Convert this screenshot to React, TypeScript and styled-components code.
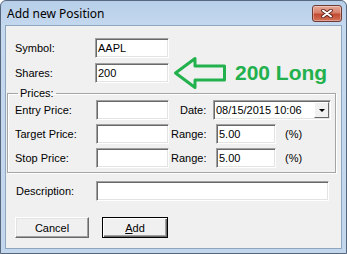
import React from 'react'
import styled, { createGlobalStyle } from 'styled-components'

const GlobalStyle = createGlobalStyle`
  html, body {
    margin: 0;
    padding: 0;
  }
  body {
    width: 347px;
    height: 254px;
    overflow: hidden;
    background: #ffffff;
  }
`

const Window = styled.div`
  box-sizing: border-box;
  width: 347px;
  height: 254px;
  display: flex;
  flex-direction: column;
  padding: 0 4px 4px 4px;
  border: 1px solid #56677e;
  border-radius: 6px 6px 0 0;
  background: linear-gradient(to bottom, #b7cfe9 0px, #c4d8ee 24px, #c2d6ec 100%);
  font-family: 'Liberation Sans', Arial, sans-serif;
  font-size: 11px;
  color: #000;
`

const TitleBar = styled.div`
  height: 24px;
  display: flex;
  align-items: center;
  justify-content: space-between;
  padding-left: 2px;
`

const Title = styled.span`
  font-family: 'Noto Sans', 'Open Sans', sans-serif;
  font-size: 12px;
  color: #000;
`

const CloseButton = styled.div`
  box-sizing: border-box;
  width: 30px;
  height: 17px;
  border: 1px solid #6e3a33;
  border-radius: 3px;
  background: linear-gradient(to bottom, #e7a999 0%, #d7806c 45%, #c24a32 55%, #d2745a 100%);
  box-shadow: inset 0 0 0 1px rgba(255, 255, 255, 0.35);
  display: flex;
  align-items: center;
  justify-content: center;
`

const Client = styled.div`
  flex: 1;
  display: flex;
  flex-direction: column;
  border: 1px solid #8fa6c1;
  background: #f0f0f0;
  padding: 12px 0 0 9px;
`

const Row = styled.div<{ $top?: number }>`
  display: flex;
  align-items: center;
  height: 20px;
  margin-top: ${(p) => p.$top ?? 0}px;
`

const Label = styled.span<{ $width: number; $indent?: number }>`
  width: ${(p) => p.$width}px;
  padding-left: ${(p) => p.$indent ?? 0}px;
  box-sizing: border-box;
  flex-shrink: 0;
  white-space: nowrap;
`

const TextBox = styled.div<{ $width: number; $left?: number }>`
  box-sizing: border-box;
  width: ${(p) => p.$width}px;
  height: 20px;
  margin-left: ${(p) => p.$left ?? 0}px;
  flex-shrink: 0;
  background: #fff;
  border-top: 1px solid #a0a0a0;
  border-left: 1px solid #a0a0a0;
  border-right: 1px solid #fff;
  border-bottom: 1px solid #fff;
  box-shadow: inset 1px 1px 0 #696969, inset -1px -1px 0 #e3e3e3;
  padding: 2px 0 0 2px;
  line-height: 15px;
  white-space: nowrap;
  overflow: hidden;
`

const Arrow = styled.svg`
  margin: -7px 0 -7px 4px;
  flex-shrink: 0;
`

const Note = styled.span`
  margin-left: 8px;
  font-family: 'Liberation Sans', Arial, sans-serif;
  font-weight: bold;
  font-size: 21px;
  line-height: 20px;
  color: #22b14c;
  white-space: nowrap;
`

const Group = styled.fieldset`
  margin: 4px 5px 0 -8px;
  padding: 0 0 4px 7px;
  border: 1px solid #a5a5a5;
  box-shadow: inset 1px 1px 0 #fff, 1px 1px 0 #fff;
  min-width: 0;
`

const Legend = styled.legend`
  margin-left: 3px;
  padding: 0 2px;
  line-height: 13px;
`

const GroupRow = styled(Row)`
  & + & {
    margin-top: 4px;
  }
`

const DateBox = styled(TextBox)`
  display: flex;
  justify-content: space-between;
  padding: 0 1px 0 2px;
  align-items: center;
`

const DropButton = styled.div`
  box-sizing: border-box;
  width: 15px;
  height: 16px;
  background: #f0f0f0;
  border-top: 1px solid #fff;
  border-left: 1px solid #fff;
  border-right: 1px solid #696969;
  border-bottom: 1px solid #696969;
  display: flex;
  align-items: center;
  justify-content: center;
  &::after {
    content: '';
    border-left: 3px solid transparent;
    border-right: 3px solid transparent;
    border-top: 3px solid #000;
  }
`

const Unit = styled.span`
  margin-left: 9px;
`

const ButtonBar = styled.div`
  display: flex;
  margin-top: 16px;
`

const Button = styled.div<{ $width: number; $left?: number; $default?: boolean }>`
  box-sizing: border-box;
  width: ${(p) => p.$width}px;
  height: 21px;
  margin-left: ${(p) => p.$left ?? 0}px;
  display: flex;
  align-items: center;
  justify-content: center;
  background: #f0f0f0;
  border: 1px solid ${(p) => (p.$default ? '#000' : '#fff')};
  border-right-color: ${(p) => (p.$default ? '#000' : '#696969')};
  border-bottom-color: ${(p) => (p.$default ? '#000' : '#696969')};
  box-shadow: ${(p) =>
    p.$default
      ? 'inset 1px 1px 0 #fff, inset -1px -1px 0 #696969, inset -2px -2px 0 #a0a0a0'
      : 'inset -1px -1px 0 #a0a0a0, inset 1px 1px 0 #e3e3e3'};
`

const Accel = styled.span`
  text-decoration: underline;
`

const App = () => {
  return (
    <>
      <GlobalStyle />
      <Window>
        <TitleBar>
          <Title>Add new Position</Title>
          <CloseButton>
            <svg width="12" height="9" viewBox="0 0 12 9">
              <path d="M2 1.5 L10 7.5 M10 1.5 L2 7.5" stroke="#5a1e16" strokeWidth="3.6" strokeLinecap="round" />
              <path d="M2 1.5 L10 7.5 M10 1.5 L2 7.5" stroke="#fff" strokeWidth="2" strokeLinecap="round" />
            </svg>
          </CloseButton>
        </TitleBar>
        <Client>
          <Row>
            <Label $width={80}>Symbol:</Label>
            <TextBox $width={74}>AAPL</TextBox>
          </Row>
          <Row $top={5}>
            <Label $width={80}>Shares:</Label>
            <TextBox $width={74}>200</TextBox>
            <Arrow width="54" height="34" viewBox="0 0 54 34">
              <path
                d="M2.5 17 L22 2.5 L22 10 L51.5 10 L51.5 24 L22 24 L22 31.5 Z"
                fill="none"
                stroke="#22b14c"
                strokeWidth="3"
                strokeLinejoin="round"
              />
            </Arrow>
            <Note>200 Long</Note>
          </Row>
          <Group>
            <Legend>Prices:</Legend>
            <GroupRow>
              <Label $width={81}>Entry Price:</Label>
              <TextBox $width={73} />
              <Label $width={44} $indent={11}>Date:</Label>
              <DateBox $width={118}>
                08/15/2015 10:06
                <DropButton />
              </DateBox>
            </GroupRow>
            <GroupRow>
              <Label $width={81}>Target Price:</Label>
              <TextBox $width={73} />
              <Label $width={44} $indent={2}>Range:</Label>
              <TextBox $width={60} $left={3}>5.00</TextBox>
              <Unit>(%)</Unit>
            </GroupRow>
            <GroupRow>
              <Label $width={81}>Stop Price:</Label>
              <TextBox $width={73} />
              <Label $width={44} $indent={2}>Range:</Label>
              <TextBox $width={60} $left={3}>5.00</TextBox>
              <Unit>(%)</Unit>
            </GroupRow>
          </Group>
          <Row $top={8}>
            <Label $width={81} $indent={1}>Description:</Label>
            <TextBox $width={233} />
          </Row>
          <ButtonBar>
            <Button $width={74}>Cancel</Button>
            <Button $width={66} $left={13} $default>
              <span>
                <Accel>A</Accel>dd
              </span>
            </Button>
          </ButtonBar>
        </Client>
      </Window>
    </>
  )
}

export default App
